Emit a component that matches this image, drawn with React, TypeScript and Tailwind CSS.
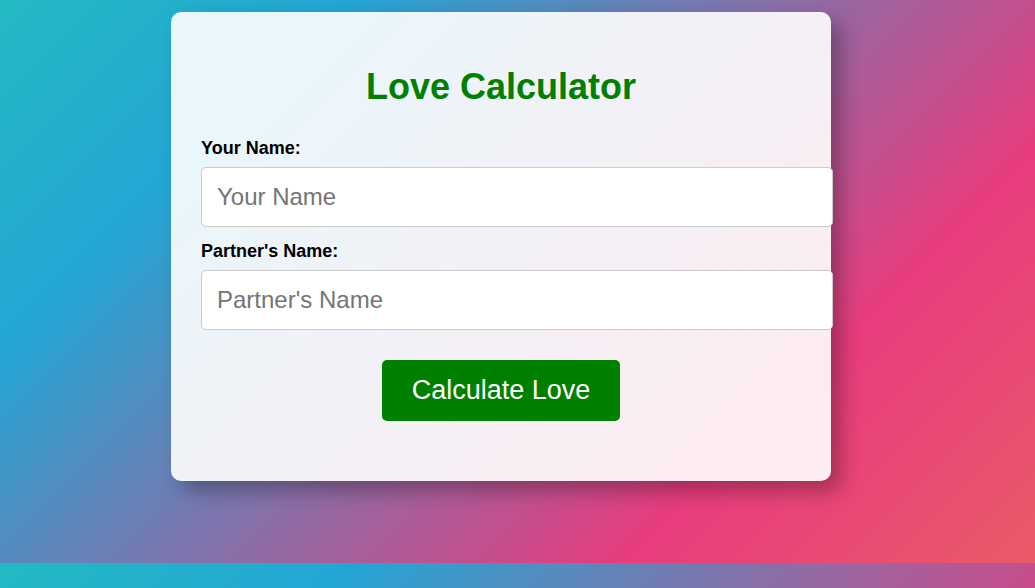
import { useState } from 'react';

const App = () => {
    const [name, setName] = useState('');
    const [partner, setPartner] = useState('');

    return (
        <div className="h-[588px] w-full overflow-hidden bg-[linear-gradient(135deg,#23d5ab_-30%,#23a6d5_22%,#e73c7e_74%,#ee7752_126%)] bg-[length:100%_563px] bg-repeat font-['Liberation_Sans',Arial,sans-serif]">
            <div className="pt-[12px] pl-[171px]">
                <div className="w-[660px] rounded-[10px] bg-white/90 p-[30px] pb-[60px] shadow-[10px_10px_20px_rgba(0,0,0,0.3)]">
                    <h1 className="mt-[24px] mb-[30px] text-center text-[36px] font-bold leading-[normal] text-[#008000]">
                        Love Calculator
                    </h1>
                    <form onSubmit={(e) => e.preventDefault()}>
                        <label htmlFor="name" className="mb-[8px] block text-[18px] font-bold leading-[normal] text-black">
                            Your Name:
                        </label>
                        <input
                            id="name"
                            type="text"
                            value={name}
                            onChange={(e) => setName(e.target.value)}
                            placeholder="Your Name"
                            className="mb-[14px] box-content block w-[600px] rounded-[5px] border border-[#ccc] bg-white p-[15px] text-[24px] leading-[normal] text-black outline-none placeholder:text-[#757575]"
                        />
                        <label htmlFor="partner" className="mb-[8px] block text-[18px] font-bold leading-[normal] text-black">
                            Partner's Name:
                        </label>
                        <input
                            id="partner"
                            type="text"
                            value={partner}
                            onChange={(e) => setPartner(e.target.value)}
                            placeholder="Partner's Name"
                            className="box-content block w-[600px] rounded-[5px] border border-[#ccc] bg-white p-[15px] text-[24px] leading-[normal] text-black outline-none placeholder:text-[#757575]"
                        />
                        <div className="mt-[30px] flex justify-center">
                            <button
                                type="submit"
                                className="rounded-[5px] bg-[#008000] px-[30px] py-[15px] text-[27px] leading-[normal] text-white"
                            >
                                Calculate Love
                            </button>
                        </div>
                    </form>
                </div>
            </div>
        </div>
    )
}

export default App;
